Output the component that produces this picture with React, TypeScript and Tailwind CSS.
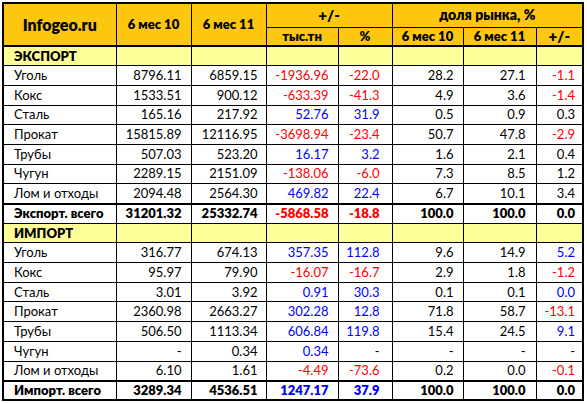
type Cell = { v: string; c?: "r" | "b" };

type Row = { name: string; cells: Cell[]; total?: boolean };

const r = (v: string): Cell => ({ v, c: "r" });
const b = (v: string): Cell => ({ v, c: "b" });
const k = (v: string): Cell => ({ v });

const exportRows: Row[] = [
  { name: "Уголь", cells: [k("8796.11"), k("6859.15"), r("-1936.96"), r("-22.0"), k("28.2"), k("27.1"), r("-1.1")] },
  { name: "Кокс", cells: [k("1533.51"), k("900.12"), r("-633.39"), r("-41.3"), k("4.9"), k("3.6"), r("-1.4")] },
  { name: "Сталь", cells: [k("165.16"), k("217.92"), b("52.76"), b("31.9"), k("0.5"), k("0.9"), k("0.3")] },
  { name: "Прокат", cells: [k("15815.89"), k("12116.95"), r("-3698.94"), r("-23.4"), k("50.7"), k("47.8"), r("-2.9")] },
  { name: "Трубы", cells: [k("507.03"), k("523.20"), b("16.17"), b("3.2"), k("1.6"), k("2.1"), k("0.4")] },
  { name: "Чугун", cells: [k("2289.15"), k("2151.09"), r("-138.06"), r("-6.0"), k("7.3"), k("8.5"), k("1.2")] },
  { name: "Лом и отходы", cells: [k("2094.48"), k("2564.30"), b("469.82"), b("22.4"), k("6.7"), k("10.1"), k("3.4")] },
  { name: "Экспорт. всего", total: true, cells: [k("31201.32"), k("25332.74"), r("-5868.58"), r("-18.8"), k("100.0"), k("100.0"), k("0.0")] },
];

const importRows: Row[] = [
  { name: "Уголь", cells: [k("316.77"), k("674.13"), b("357.35"), b("112.8"), k("9.6"), k("14.9"), b("5.2")] },
  { name: "Кокс", cells: [k("95.97"), k("79.90"), r("-16.07"), r("-16.7"), k("2.9"), k("1.8"), r("-1.2")] },
  { name: "Сталь", cells: [k("3.01"), k("3.92"), b("0.91"), b("30.3"), k("0.1"), k("0.1"), b("0.0")] },
  { name: "Прокат", cells: [k("2360.98"), k("2663.27"), b("302.28"), b("12.8"), k("71.8"), k("58.7"), r("-13.1")] },
  { name: "Трубы", cells: [k("506.50"), k("1113.34"), b("606.84"), b("119.8"), k("15.4"), k("24.5"), b("9.1")] },
  { name: "Чугун", cells: [k("-"), k("0.34"), b("0.34"), k("-"), k("-"), k("-"), k("-")] },
  { name: "Лом и отходы", cells: [k("6.10"), k("1.61"), r("-4.49"), r("-73.6"), k("0.2"), k("0.0"), r("-0.1")] },
  { name: "Импорт. всего", total: true, cells: [k("3289.34"), k("4536.51"), b("1247.17"), b("37.9"), k("100.0"), k("100.0"), k("0.0")] },
];

// right padding per numeric column
const pads = ["pr-[9px]", "pr-[8px]", "pr-[9px]", "pr-[12px]", "pr-[9px]", "pr-[10px]", "pr-[7px]"];

const Section = ({ title, rows }: { title: string; rows: Row[] }) => (
  <>
    <tr className="h-[19.7px] bg-[#FFFF99]">
      <td className="border border-black pl-[10px] font-extrabold">{title}</td>
      {pads.map((_, i) => (
        <td key={i} className="border border-black"></td>
      ))}
    </tr>
    {rows.map((row) => (
      <tr key={title + row.name} className={`h-[19.7px] bg-white ${row.total ? "font-extrabold" : ""}`}>
        <td className={`border border-black pl-[10px] ${row.total ? "border-t-2" : ""}`}>{row.name}</td>
        {row.cells.map((cell, i) => (
          <td
            key={i}
            className={`border border-black text-right ${pads[i]} ${row.total ? "border-t-2" : ""} ${
              cell.c === "r" ? "text-[#FF0000]" : cell.c === "b" ? "text-[#0000FF]" : "text-black"
            }`}
          >
            {cell.v}
          </td>
        ))}
      </tr>
    ))}
  </>
);

const App = () => {
  return (
    <div className="w-[587px] h-[404px] bg-white pl-[2px] pt-[2px]" style={{ fontFamily: "Lato, 'Liberation Sans', sans-serif" }}>
      <table className="table-fixed border-collapse border-2 border-black text-[13px] leading-none text-black">
        <colgroup>
          <col className="w-[113px]" />
          <col className="w-[75px]" />
          <col className="w-[75px]" />
          <col className="w-[72px]" />
          <col className="w-[54px]" />
          <col className="w-[71px]" />
          <col className="w-[73px]" />
          <col className="w-[47px]" />
        </colgroup>
        <thead className="bg-[#FCC70E] font-extrabold">
          <tr className="h-[24px]">
            <td rowSpan={2} className="border border-black border-b-2 text-center text-[16px]">Infogeo.ru</td>
            <td rowSpan={2} className="border border-black border-b-2 text-center">6 мес 10</td>
            <td rowSpan={2} className="border border-black border-b-2 text-center">6 мес 11</td>
            <td colSpan={2} className="border border-black text-center text-[15px]">+/-</td>
            <td colSpan={3} className="border border-black text-center text-[14px]">доля рынка, %</td>
          </tr>
          <tr className="h-[19px]">
            <td className="border border-black border-b-2 text-center">тыс.тн</td>
            <td className="border border-black border-b-2 text-center">%</td>
            <td className="border border-black border-b-2 text-center">6 мес 10</td>
            <td className="border border-black border-b-2 text-center">6 мес 11</td>
            <td className="border border-black border-b-2 text-center text-[15px]">+/-</td>
          </tr>
        </thead>
        <tbody>
          <Section title="ЭКСПОРТ" rows={exportRows} />
          <Section title="ИМПОРТ" rows={importRows} />
        </tbody>
      </table>
    </div>
  );
};

export default App;
